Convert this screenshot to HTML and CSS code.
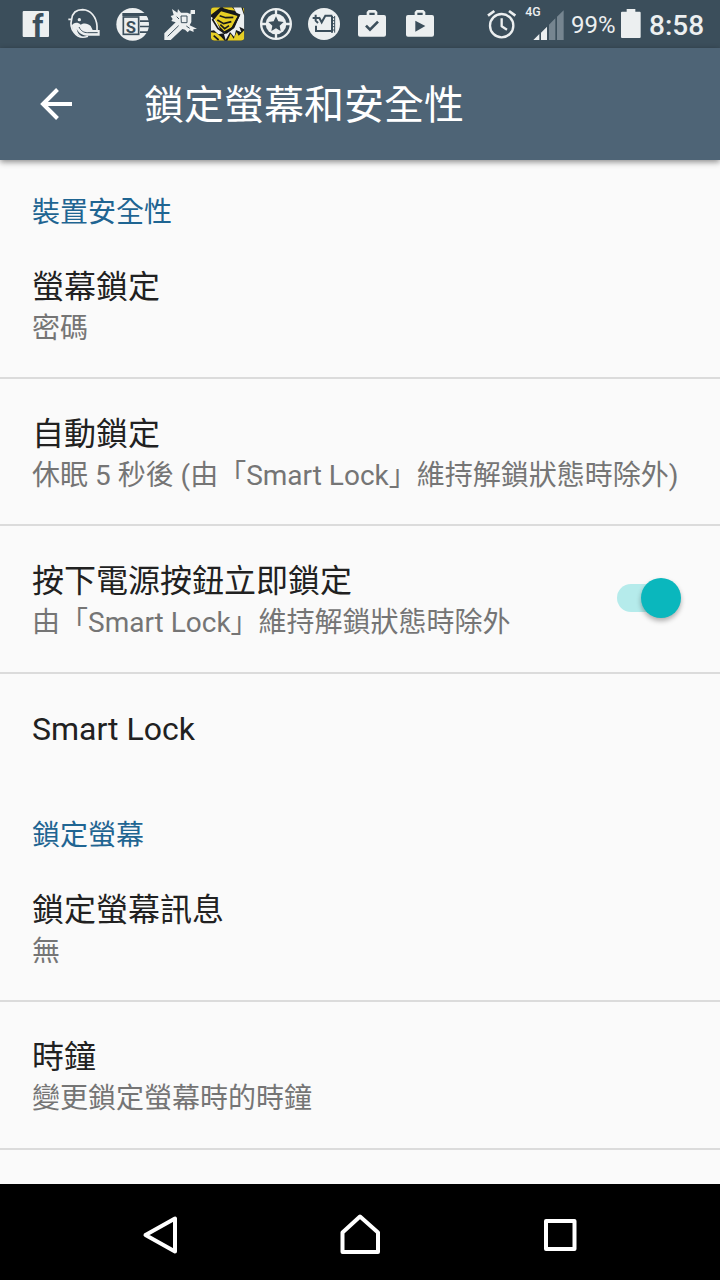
FILE: index.html
```html
<!DOCTYPE html>
<html lang="zh-Hant">
<head>
<meta charset="utf-8">
<title>鎖定螢幕和安全性</title>
<link rel="stylesheet" href="styles.css">
</head>
<body>
<div class="screen">
  <header class="statusbar">
    <div class="notifications">
      <svg class="note" viewBox="0 0 144 144"><rect class="ink" x="32" y="33" width="79" height="78" rx="3"/><text class="cut fb" x="61" y="111">f</text></svg>
      <svg class="note" viewBox="0 0 144 144">
        <path class="line outline" d="M25 58 H35 C37 39 50 29 68 29 C92 30 109 50 111 78 V90 M35 58 C31 72 34 87 42 97 C52 111 66 115 84 109"/>
        <circle class="ink" cx="58" cy="59" r="5"/>
        <path class="ink" d="M36 76 C40 67 54 66 62 74 C70 68 84 69 92 78 L98 90 H119 V107 H80 C66 106 54 97 50 86 C52 99 59 106 68 110 C48 108 35 93 36 76Z"/>
        <path class="cutline thin" d="M57 81 C63 93 71 98 83 98 H113"/>
      </svg>
      <svg class="note" viewBox="0 0 144 144">
        <circle class="ink" cx="74" cy="73" r="49"/>
        <path class="cut" d="M43 39 H124 V48 H43Z M96 61 H125 V66 H96Z M96 77 H125 V82 H96Z M96 94 H125 V99 H96Z"/>
        <rect class="box" x="46" y="51" width="46" height="52"/>
        <text class="cut letter-s" x="53" y="98">S</text>
      </svg>
      <svg class="note" viewBox="0 0 144 144">
        <path class="ink" d="M25 120 V100 L59 67 L46 63 L50 57 L44 48 L53 45 L48 27 L64 38 L66 27 L75 38 H94 L103 42 L104 30 H117 V42 H106 V66 L101 76 L123 86 L112 88 L113 96 L101 91 L95 97 L87 89 L79 87 L44 120Z"/>
        <path class="cutline thin" d="M35 109 L68 77 M75 48 H93 V68 H76 Z M62 50 L69 57 M91 78 L101 85"/>
        <rect class="ink" x="80" y="53" width="9" height="9"/>
      </svg>
      <svg class="note" viewBox="0 0 144 144">
        <clipPath id="comic"><rect x="21" y="22" width="100" height="100" rx="10"/></clipPath>
        <g clip-path="url(#comic)">
          <rect class="black" x="21" y="22" width="100" height="100"/>
          <path class="ink" d="M88 22 H112 L121 48 V88 L106 80 L112 97 L96 90 L91 111 L78 96 L65 120 L59 100 L43 103 L30 91 L21 92 V50 L36 60 L49 90 L68 101 L91 84 L107 47 L96 37Z"/>
          <path class="yellow" d="M21 22 H50 L21 44Z M56 22 H84 L94 32 L62 28Z M116 22 H121 V42Z M21 97 L37 99 L52 111 L62 122 H21Z M70 122 L80 101 L89 116 L98 96 L104 107 L121 91 V122Z"/>
          <path class="yellow" d="M31 57 L51 34 L101 48 L83 82 L61 94 L46 79Z"/>
          <path class="comicline" d="M26 59 L45 32 L62 28 L106 45 L86 83 L62 100 L42 85Z M40 60 L59 71 L82 65 M47 47 L65 53 L88 52 M49 74 L62 86 L75 77 M29 107 L44 120"/>
        </g>
      </svg>
      <svg class="note" viewBox="0 0 144 144">
        <circle class="line" cx="72" cy="72" r="44.5"/><circle class="ink" cx="72" cy="72" r="31"/>
        <path class="line" d="M72 27 V47 M72 97 V117 M27 72 H47 M97 72 H117"/>
        <path class="cut" d="M72 49 L79 64 L95 66 L83 77 L86 93 L72 85 L58 93 L61 77 L49 66 L65 64Z"/>
      </svg>
      <svg class="note" viewBox="0 0 144 144">
        <circle class="ink" cx="72" cy="72" r="48"/>
        <path class="cutline" d="M38 54 H56 M47 44 V62 L54 69 M57 52 L65 67 L76 47 H97 M48 77 V93 H98 M96 48 V98"/>
        <path class="cutline thin" d="M104 48 V98 M96 53 H104 M96 62 H104 M96 71 H104 M96 80 H104 M96 90 H104"/>
      </svg>
      <svg class="note" viewBox="0 0 144 144"><path class="ink" fill-rule="evenodd" d="M36 45 H56 V36 L62 30 H82 L88 36 V45 H108 Q114 45 114 51 V104 Q114 110 108 110 H36 Q30 110 30 104 V51 Q30 45 36 45Z M64 45 H80 V38 H64Z"/><path class="cutline check" d="M54 77 L66 89 L90 65"/></svg>
      <svg class="note" viewBox="0 0 144 144"><path class="ink" fill-rule="evenodd" d="M36 45 H56 V36 L62 30 H82 L88 36 V45 H108 Q114 45 114 51 V104 Q114 110 108 110 H36 Q30 110 30 104 V51 Q30 45 36 45Z M64 45 H80 V38 H64Z"/><path class="cut" d="M58 62 L88 78 L58 95Z"/></svg>
    </div>
    <div class="system">
      <svg class="alarm" viewBox="0 0 150 144"><circle class="line" cx="80" cy="77" r="35"/><path class="line" d="M80 55 V79 L96 89"/><path class="line bell" d="M39 47 L58 33 M102 33 L121 47"/></svg>
      <svg class="signal" viewBox="150 0 132 144"><text class="ink net" x="151" y="48">4G</text><path class="dim" d="M222 74 L241 55 V120 H222Z M246 50 L266 31 V120 H246Z"/><path class="ink" d="M175 120 L193 102 V120Z M198 98 L216 80 V120 H198Z"/></svg>
      <span class="percent">99%</span>
      <svg class="battery" viewBox="438 0 60 144"><path class="ink" d="M455 27 H481 V35 H494 Q497 35 497 38 V111 Q497 114 494 114 H441 Q438 114 438 111 V38 Q438 35 441 35 H455Z"/></svg>
      <span class="time">8:58</span>
    </div>
  </header>

  <div class="toolbar">
    <svg class="back" viewBox="0 0 34 34"><path d="M33 17 H4 M18.500 2.500 L4 17 L18.500 31.500"/></svg>
    <h1 class="heading">鎖定螢幕和安全性</h1>
  </div>

  <main class="settings">
    <h2 class="section">裝置安全性</h2>
    <div class="item"><div class="copy"><div class="title">螢幕鎖定</div><div class="summary">密碼</div></div></div>
    <div class="item"><div class="copy"><div class="title">自動鎖定</div><div class="summary">休眠 5 秒後 (由「Smart Lock」維持解鎖狀態時除外)</div></div></div>
    <div class="item"><div class="copy"><div class="title">按下電源按鈕立即鎖定</div><div class="summary">由「Smart Lock」維持解鎖狀態時除外</div></div><div class="switch"><div class="thumb"></div></div></div>
    <div class="item single"><div class="title">Smart Lock</div></div>
    <h2 class="section">鎖定螢幕</h2>
    <div class="item"><div class="copy"><div class="title">鎖定螢幕訊息</div><div class="summary">無</div></div></div>
    <div class="item"><div class="copy"><div class="title">時鐘</div><div class="summary">變更鎖定螢幕時的時鐘</div></div></div>
  </main>

  <nav class="navbar">
    <svg class="key" viewBox="0 0 48 48"><path d="M9.500 24 L39 7.500 V40.500 Z"/></svg>
    <svg class="key" viewBox="0 0 48 48"><path d="M24 5.500 L42 21.500 V41 H6.500 V21.500 Z"/></svg>
    <svg class="key" viewBox="0 0 48 48"><path d="M10 10 H38.500 V38 H10 Z"/></svg>
  </nav>
</div>
</body>
</html>
```
FILE: styles.css
```css
* { box-sizing: border-box; }
body { margin: 0; font-family: Roboto, "Noto Sans CJK TC", sans-serif; }
svg { display: block; flex: none; }
.screen { width: 720px; height: 1280px; display: flex; flex-direction: column; overflow: hidden; background: #fafafa; }

.statusbar { height: 48px; flex: none; display: flex; background: #3b4e5b; color: #eceff0; padding-left: 12px; }
.notifications { display: flex; width: 463px; }
.note { width: 48px; height: 48px; }
.system { display: flex; align-items: center; }
.alarm { width: 50px; height: 48px; }
.signal { width: 44px; height: 48px; }
.battery { width: 20px; height: 48px; margin-left: 1px; }
.percent { width: 51px; padding-left: 2px; font-size: 24px; line-height: 48px; padding-top: 2px; }
.time { padding-left: 8px; padding-top: 3px; font-size: 28px; line-height: 48px; font-weight: 500; }

.ink { fill: #eceff0; }
.cut { fill: #3b4e5b; }
.dim { fill: #768590; }
.black { fill: #17191a; }
.yellow { fill: #e6ce25; }
.line, .cutline, .comicline { fill: none; stroke: #eceff0; stroke-width: 7; }
.line { stroke-linejoin: round; }
.outline { stroke-width: 5; }
.cutline { stroke: #3b4e5b; stroke-width: 6; }
.thin { stroke-width: 3; }
.check { stroke-width: 8; }
.bell { stroke-width: 8; }
.comicline { stroke: #17191a; stroke-width: 5; }
.box { fill: #eceff0; stroke: #3b4e5b; stroke-width: 5; }
.fb { font: 700 94px Roboto, sans-serif; }
.letter-s { font: 700 50px Roboto, sans-serif; }
.net { font: 500 37px Roboto, sans-serif; }

.toolbar { height: 112px; flex: none; display: flex; align-items: center; padding-left: 39px; background: #4e6476; box-shadow: 0 2px 6px rgba(0, 0, 0, .45); position: relative; }
.back { width: 34px; height: 34px; fill: none; stroke: #fff; stroke-width: 4; }
.heading { margin: 4px 0 0 71px; font-size: 40px; line-height: 56px; font-weight: 400; color: #fff; }

.settings { flex: 1; min-height: 0; overflow: hidden; }
.section { height: 72px; margin: 0; padding: 33px 32px 0; font-size: 28px; line-height: 40px; font-weight: 400; color: #1f6592; }
.item { height: 147.200px; padding: 33px 39px 0 32px; border-bottom: 2px solid #dbdbdb; display: flex; justify-content: space-between; }
.single { height: 109.700px; border: 0; }
.title { font-size: 32px; line-height: 44px; color: #212121; }
.summary { font-size: 28px; line-height: 38px; margin-top: 0.600px; color: #757575; white-space: nowrap; }
.copy { width: 0; flex: 1; }
.switch { width: 64px; height: 28px; margin-top: 25px; border-radius: 14px; background: linear-gradient(90deg, #b5ebeb 0 44px, transparent 44px); display: flex; justify-content: flex-end; align-items: center; }
.thumb { width: 40px; height: 40px; border-radius: 50%; background: #0ab7bd; box-shadow: 0 3px 5px rgba(0, 0, 0, .3); }

.navbar { height: 96px; flex: none; background: #000; display: flex; justify-content: center; gap: 152px; padding-top: 27px; }
.key { width: 48px; height: 48px; fill: none; stroke: #fff; stroke-width: 4; stroke-linejoin: round; }
```
